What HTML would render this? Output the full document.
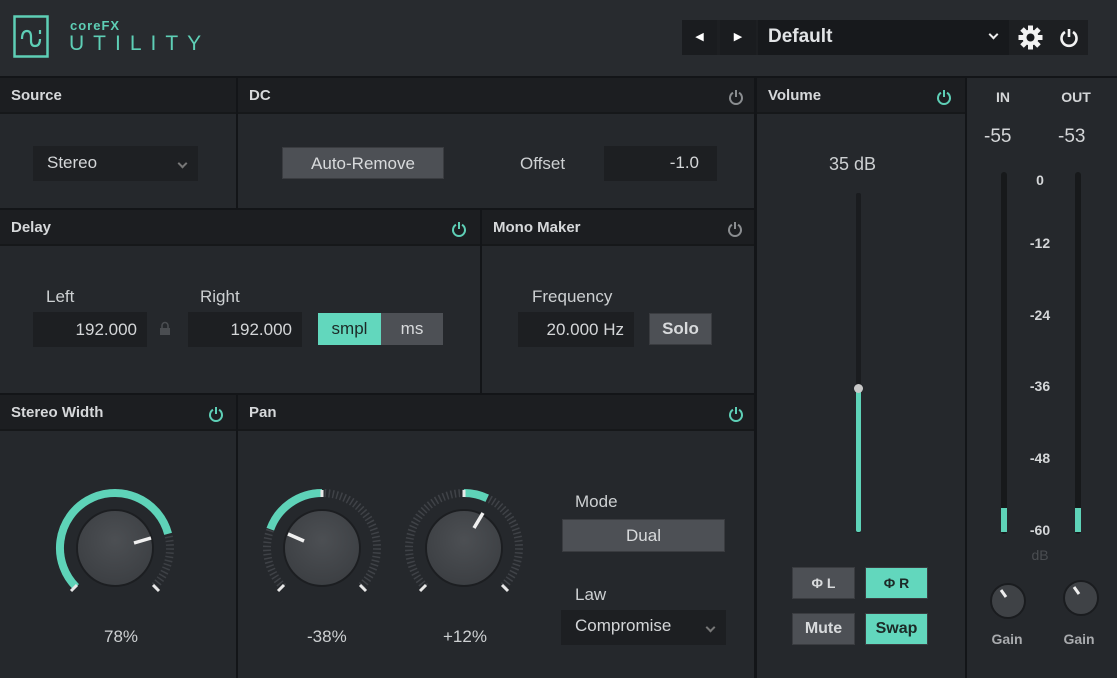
<!DOCTYPE html>
<html><head><meta charset="utf-8"><style>
*{box-sizing:border-box;margin:0;padding:0}
body{width:1117px;height:678px;background:#131518;font-family:"Liberation Sans",sans-serif;color:#c9cbcd;position:relative;overflow:hidden}
.a{position:absolute}
.panel{position:absolute;background:#25282c}
.hdr{position:absolute;left:0;right:0;top:0;height:36px;background:#1c1e21;border-bottom:2px solid #16181a;font-size:15px;font-weight:bold;color:#d6d8da;padding:9px 0 0 11px}
.box{position:absolute;background:#1d1f22;color:#d4d6d8;font-size:17px}
.btn{position:absolute;background:#4d5055;color:#d8dadc;font-size:17px;text-align:center;border:1px solid #3a3c40}
.teal{background:#62d7bd;color:#1c2a27}
.lbl{position:absolute;font-size:17px;color:#cdd0d2}
.pw{position:absolute;width:16px;height:16px}
.sc{position:absolute;font-size:14px;font-weight:bold;color:#d4d6d8;width:40px;text-align:center}
.chev{position:absolute;right:12px;top:14px;width:7px;height:7px;border-right:2px solid #777;border-bottom:2px solid #777;transform:rotate(45deg)}
</style></head><body>
<div class="a" style="left:0;top:0;width:1117px;height:76px;background:#282b2f"></div>
<svg class="a" style="left:13px;top:15px" width="38" height="45" viewBox="0 0 38 45"><rect x="1.5" y="1.5" width="33" height="40" fill="none" stroke="#5ecfb6" stroke-width="2.5"/><path d="M9 24 Q9 16 14 16 Q18 16 18 22 L18 26 Q18 31 22 31 Q27 31 27 24 M27 15 L27 19" fill="none" stroke="#5ecfb6" stroke-width="2.2"/></svg>
<div class="a" style="left:70px;top:18px;font-size:13px;font-weight:bold;color:#5ecfb6;letter-spacing:1px">coreFX</div>
<div class="a" style="left:69px;top:32px;font-size:21px;color:#5ecfb6;letter-spacing:9px">UTILITY</div>
<div class="a" style="left:682px;top:20px;width:406px;height:35px;background:#1d1f22"></div>
<div class="a" style="left:682px;top:20px;width:35px;height:35px;background:#1a1c1f;color:#fff;font-size:11px;text-align:center;line-height:35px">◀</div>
<div class="a" style="left:720px;top:20px;width:36px;height:35px;background:#1a1c1f;color:#fff;font-size:11px;text-align:center;line-height:35px">▶</div>
<div class="a" style="left:758px;top:20px;width:251px;height:35px;background:#17191c;color:#e2e4e6;font-size:19px;font-weight:bold;padding:6px 0 0 10px">Default<span class="chev" style="border-color:#eee;top:11px"></span></div>
<svg class="a" style="left:1018px;top:25px" width="25" height="25" viewBox="-12.5 -12.5 25 25"><g fill="#f2f2f2"><circle r="8"/><rect x="-2.5" y="-12" width="5" height="24"/><rect x="-2.5" y="-12" width="5" height="24" transform="rotate(45)"/><rect x="-2.5" y="-12" width="5" height="24" transform="rotate(90)"/><rect x="-2.5" y="-12" width="5" height="24" transform="rotate(135)"/></g><circle r="4" fill="#17191c"/></svg>
<svg class="a" style="left:1059px;top:27px" width="20" height="21" viewBox="0 0 20 21"><path d="M6 5 A7.5 7.5 0 1 0 14 5" fill="none" stroke="#f2f2f2" stroke-width="2.6"/><line x1="10" y1="2" x2="10" y2="10" stroke="#f2f2f2" stroke-width="2.6"/></svg>

<div class="panel" style="left:0;top:78px;width:236px;height:130px"><div class="hdr">Source</div>
<div class="box" style="left:33px;top:68px;width:165px;height:35px;padding:7px 0 0 14px;background:#1e2023">Stereo<span class="chev"></span></div></div>
<div class="panel" style="left:238px;top:78px;width:516px;height:130px"><div class="hdr">DC</div>
<svg class="pw" style="left:490px;top:11px" viewBox="0 0 16 16"><path d="M5 3.8 A6 6 0 1 0 11 3.8" fill="none" stroke="#8a8d90" stroke-width="2"/><line x1="8" y1="1" x2="8" y2="8" stroke="#8a8d90" stroke-width="2"/></svg>
<div class="btn" style="left:44px;top:69px;width:162px;height:32px;padding-top:6px">Auto-Remove</div>
<div class="lbl" style="left:282px;top:76px">Offset</div>
<div class="box" style="left:366px;top:68px;width:113px;height:35px;text-align:right;padding:7px 18px 0 0">-1.0</div></div>
<div class="panel" style="left:0;top:210px;width:480px;height:183px"><div class="hdr">Delay</div>
<svg class="pw" style="left:451px;top:11px" viewBox="0 0 16 16"><path d="M5 3.8 A6 6 0 1 0 11 3.8" fill="none" stroke="#5ecfb6" stroke-width="2"/><line x1="8" y1="1" x2="8" y2="8" stroke="#5ecfb6" stroke-width="2"/></svg>
<div class="lbl" style="left:46px;top:77px">Left</div>
<div class="lbl" style="left:200px;top:77px">Right</div>
<div class="box" style="left:33px;top:102px;width:114px;height:35px;text-align:right;padding:8px 10px 0 0">192.000</div>
<svg class="a" style="left:159px;top:111px" width="12" height="15" viewBox="0 0 12 15"><path d="M3 7 V4.5 A3 3 0 0 1 9 4.5 V7" fill="none" stroke="#4a4d51" stroke-width="1.6"/><rect x="1" y="7" width="10" height="7" fill="#4a4d51"/></svg>
<div class="box" style="left:188px;top:102px;width:114px;height:35px;text-align:right;padding:8px 10px 0 0">192.000</div>
<div class="btn teal" style="left:318px;top:103px;width:63px;height:32px;padding-top:6px;border:0">smpl</div>
<div class="btn" style="left:381px;top:103px;width:62px;height:32px;padding-top:6px;border:0">ms</div></div>
<div class="panel" style="left:482px;top:210px;width:272px;height:183px"><div class="hdr">Mono Maker</div>
<svg class="pw" style="left:245px;top:11px" viewBox="0 0 16 16"><path d="M5 3.8 A6 6 0 1 0 11 3.8" fill="none" stroke="#8a8d90" stroke-width="2"/><line x1="8" y1="1" x2="8" y2="8" stroke="#8a8d90" stroke-width="2"/></svg>
<div class="lbl" style="left:50px;top:77px">Frequency</div>
<div class="box" style="left:36px;top:102px;width:116px;height:35px;text-align:right;padding:8px 10px 0 0">20.000 Hz</div>
<div class="btn" style="left:167px;top:103px;width:63px;height:32px;padding-top:5px;font-weight:bold">Solo</div></div>
<div class="panel" style="left:0;top:395px;width:236px;height:283px"><div class="hdr">Stereo Width</div>
<svg class="pw" style="left:208px;top:11px" viewBox="0 0 16 16"><path d="M5 3.8 A6 6 0 1 0 11 3.8" fill="none" stroke="#5ecfb6" stroke-width="2"/><line x1="8" y1="1" x2="8" y2="8" stroke="#5ecfb6" stroke-width="2"/></svg>
<div class="lbl" style="left:104px;top:232px">78%</div></div>
<div class="panel" style="left:238px;top:395px;width:516px;height:283px"><div class="hdr">Pan</div>
<svg class="pw" style="left:490px;top:11px" viewBox="0 0 16 16"><path d="M5 3.8 A6 6 0 1 0 11 3.8" fill="none" stroke="#5ecfb6" stroke-width="2"/><line x1="8" y1="1" x2="8" y2="8" stroke="#5ecfb6" stroke-width="2"/></svg>
<div class="lbl" style="left:69px;top:232px">-38%</div>
<div class="lbl" style="left:205px;top:232px">+12%</div>
<div class="lbl" style="left:337px;top:97px">Mode</div>
<div class="btn" style="left:324px;top:124px;width:163px;height:33px;padding-top:6px">Dual</div>
<div class="lbl" style="left:337px;top:190px">Law</div>
<div class="box" style="left:323px;top:215px;width:165px;height:35px;padding:6px 0 0 14px">Compromise<span class="chev"></span></div></div>

<svg class="a" style="left:0;top:0" width="760" height="678">
<defs><radialGradient id="kg" cx="50%" cy="40%" r="60%"><stop offset="0" stop-color="#4c4f53"/><stop offset="1" stop-color="#3c3f43"/></radialGradient></defs>
<g fill="none">
<path d="M76.1 586.9 A55 55 0 1 1 153.9 586.9" stroke="#3d4045" stroke-width="8" stroke-dasharray="1.5 2.5"/>
<path d="M76.1 586.9 A55 55 0 1 1 168.1 533.8" stroke="#5ed3b8" stroke-width="8"/>
<path d="M283.1 586.9 A55 55 0 1 1 360.9 586.9" stroke="#3f4247" stroke-width="8" stroke-dasharray="1.5 2.5"/>
<path d="M322 493 A55 55 0 0 0 270.3 529.2" stroke="#5ed3b8" stroke-width="8"/>
<path d="M425.1 586.9 A55 55 0 1 1 502.9 586.9" stroke="#3f4247" stroke-width="8" stroke-dasharray="1.5 2.5"/>
<path d="M464 493 A55 55 0 0 1 487.2 498.2" stroke="#5ed3b8" stroke-width="8"/>
</g>
<g stroke="#e8e8e8" stroke-width="3">
<line x1="71" y1="591" x2="77" y2="585"/><line x1="159" y1="591" x2="153" y2="585"/>
<line x1="278" y1="591" x2="284" y2="585"/><line x1="366" y1="591" x2="360" y2="585"/>
<line x1="420" y1="591" x2="426" y2="585"/><line x1="508" y1="591" x2="502" y2="585"/>
<line x1="322" y1="490" x2="322" y2="497"/><line x1="464" y1="490" x2="464" y2="497"/>
</g>
<circle cx="115" cy="548" r="38" fill="url(#kg)" stroke="#1c1e21" stroke-width="2"/>
<circle cx="322" cy="548" r="38" fill="url(#kg)" stroke="#1c1e21" stroke-width="2"/>
<circle cx="464" cy="548" r="38" fill="url(#kg)" stroke="#1c1e21" stroke-width="2"/>
<g stroke="#f0f0f0" stroke-width="3.5">
<line x1="134" y1="543" x2="151" y2="538"/>
<line x1="304" y1="541" x2="288" y2="534"/>
<line x1="474" y1="528" x2="483" y2="513"/>
</g>
</svg>

<div class="panel" style="left:757px;top:78px;width:208px;height:600px"><div class="hdr">Volume</div>
<svg class="pw" style="left:179px;top:11px" viewBox="0 0 16 16"><path d="M5 3.8 A6 6 0 1 0 11 3.8" fill="none" stroke="#5ecfb6" stroke-width="2"/><line x1="8" y1="1" x2="8" y2="8" stroke="#5ecfb6" stroke-width="2"/></svg>
<div class="lbl" style="left:72px;top:76px;font-size:18px">35 dB</div>
<div class="a" style="left:99px;top:115px;width:5px;height:340px;background:#1a1c1f;border-radius:2px"></div>
<div class="a" style="left:99px;top:311px;width:5px;height:143px;background:#5ed3b8;border-radius:2px"></div>
<div class="a" style="left:97px;top:306px;width:9px;height:9px;background:#c8c8c8;border-radius:50%"></div>
<div class="btn" style="left:35px;top:489px;width:63px;height:32px;padding-top:7px;font-size:14px;font-weight:bold">Φ L</div>
<div class="btn teal" style="left:108px;top:489px;width:63px;height:32px;padding-top:7px;font-size:14px;font-weight:bold">Φ R</div>
<div class="btn" style="left:35px;top:535px;width:63px;height:32px;padding-top:6px;font-size:16px;font-weight:bold">Mute</div>
<div class="btn teal" style="left:108px;top:535px;width:63px;height:32px;padding-top:6px;font-size:16px;font-weight:bold">Swap</div></div>

<div class="panel" style="left:967px;top:78px;width:150px;height:600px"></div>
<div class="sc" style="left:983px;top:89px">IN</div>
<div class="sc" style="left:1056px;top:89px">OUT</div>
<div class="a" style="left:984px;top:126px;font-size:19px;color:#d4d6d8">-55</div>
<div class="a" style="left:1058px;top:126px;font-size:19px;color:#d4d6d8">-53</div>
<div class="a" style="left:1001px;top:172px;width:6px;height:362px;background:#17191b;border-radius:3px"></div>
<div class="a" style="left:1001px;top:508px;width:6px;height:24px;background:#5ed3b8"></div>
<div class="a" style="left:1075px;top:172px;width:6px;height:362px;background:#17191b;border-radius:3px"></div>
<div class="a" style="left:1075px;top:508px;width:6px;height:24px;background:#5ed3b8"></div>
<div class="sc" style="left:1020px;top:172px">0</div>
<div class="sc" style="left:1020px;top:235px">-12</div>
<div class="sc" style="left:1020px;top:307px">-24</div>
<div class="sc" style="left:1020px;top:378px">-36</div>
<div class="sc" style="left:1020px;top:450px">-48</div>
<div class="sc" style="left:1020px;top:522px">-60</div>
<div class="sc" style="left:1020px;top:547px;color:#4a4d51;font-weight:normal">dB</div>
<svg class="a" style="left:985px;top:580px" width="120" height="40">
<circle cx="23" cy="21" r="17" fill="#3f4246" stroke="#1a1c1f" stroke-width="2"/><line x1="16" y1="10" x2="21" y2="17" stroke="#eee" stroke-width="3"/>
<circle cx="96" cy="18" r="17" fill="#3f4246" stroke="#1a1c1f" stroke-width="2"/><line x1="89" y1="7" x2="94" y2="14" stroke="#eee" stroke-width="3"/>
</svg>
<div class="sc" style="left:987px;top:631px;color:#a9abae">Gain</div>
<div class="sc" style="left:1059px;top:631px;color:#a9abae">Gain</div>
</body></html>
